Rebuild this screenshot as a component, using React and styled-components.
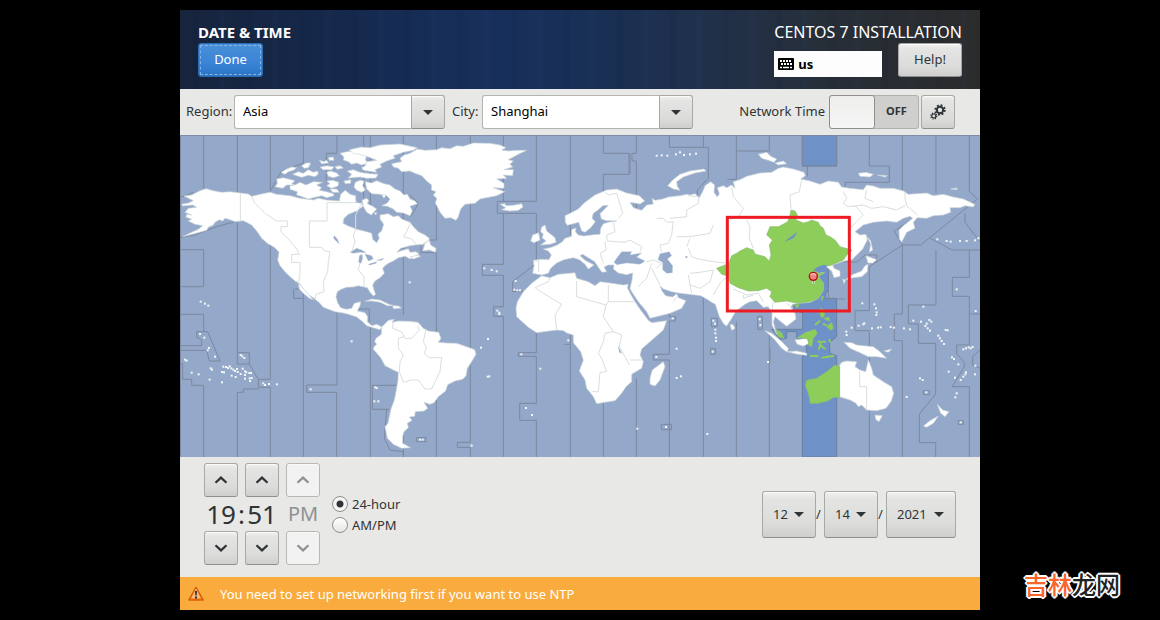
import React, { useState } from 'react';
import styled, { createGlobalStyle, css } from 'styled-components';

const GlobalStyle = createGlobalStyle`
  * {
    box-sizing: border-box;
  }

  body {
    margin: 0;
    background: #000;
    color: #2e3436;
    font-family: "Noto Sans", "Open Sans", sans-serif;
    font-size: 13px;
    line-height: 20px;
  }

  button,
  input,
  select {
    font: inherit;
    color: inherit;
    margin: 0;
  }
`;

// Raised grey look shared by every button
const raised = css`
  border: 1px solid #a8a8a4;
  border-bottom-color: #8f8f8b;
  border-radius: 3px;
  background: linear-gradient(#f2f2f1, #e4e4e3 15%, #dcdcdb 70%, #cfcfcd);
  box-shadow: inset 0 1px #fafafa;
`;

// Styled page
const Page = styled.main`
  position: relative;
  min-height: 100vh;
  padding: 10px;
`;

// Styled installer window
const Installer = styled.div`
  max-width: 800px;
  margin: 0 auto;
  background: #e8e8e6;
`;

// Styled header bar
const Header = styled.header`
  display: flex;
  justify-content: space-between;
  padding: 12px 18px;
  color: #fff;
  background:
    repeating-linear-gradient(90deg, transparent 0 11px, rgba(10, 20, 50, 0.1) 15px 17px, transparent 21px 37px, rgba(50, 90, 150, 0.06) 41px 43px, transparent 47px 53px),
    linear-gradient(90deg, #17243c 0%, #15284a 18%, #162d57 32%, #17305b 42%, #1a2f52 55%, #20304a 66%, #272e37 82%, #2b2b2b 100%);
`;

const HeaderSide = styled.div`
  display: flex;
  flex-direction: column;
  align-items: flex-start;
`;

const Title = styled.h1`
  margin: 0;
  font-size: ${props => (props.$light ? '16px' : '15px')};
  line-height: 21px;
  font-weight: ${props => (props.$light ? 400 : 700)};
`;

const HeaderRow = styled.div`
  display: flex;
  align-items: flex-end;
  justify-content: space-between;
  width: 100%;
`;

// Styled done button
const DoneButton = styled.button`
  height: 34px;
  width: 65px;
  padding: 0 0 2px;
  border: 1px solid #2a6db5;
  border-radius: 3px;
  color: #fff;
  background: linear-gradient(#4a90d9, #3a84d6 60%, #2c73c3);
  outline: 1px dashed #86b5e8;
  outline-offset: -3px;
`;

const HelpButton = styled.button`
  ${raised}
  height: 34px;
  width: 64px;
  padding: 0 0 2px;
  color: #2e3436;
`;

// Styled keyboard layout indicator
const Layout = styled.div`
  display: flex;
  align-items: center;
  gap: 4px;
  width: 108px;
  height: 26px;
  padding: 0 4px;
  background: #fdfdfd;
  color: #000;
  font-weight: 700;
`;

// Styled toolbar
const Toolbar = styled.div`
  display: flex;
  align-items: center;
  padding: 6px 25px 6px 6px;
`;

const Label = styled.label`
  width: ${props => props.$width};
  padding-bottom: 2px;
  white-space: nowrap;
`;

// Styled entry with drop-down button
const Combo = styled.div`
  display: flex;
  width: 211px;
  height: 34px;
  margin-right: 7px;
`;

const Entry = styled.input`
  flex: 1;
  min-width: 0;
  padding: 0 8px 2px;
  border: 1px solid #b4b4b0;
  border-right: 0;
  border-radius: 3px 0 0 3px;
  background: #fff;
  color: #000;
`;

const ComboButton = styled.button`
  ${raised}
  display: grid;
  place-items: center;
  width: 34px;
  padding: 0;
  border-radius: 0 3px 3px 0;
`;

const NetworkTime = styled.div`
  display: flex;
  align-items: center;
  gap: 2px;
  margin-left: auto;
`;

const SwitchLabel = styled.label`
  display: flex;
  align-items: center;
  gap: 4px;
`;

const LabelText = styled.span`
  padding-bottom: 2px;
`;

// Styled on/off switch
const Switch = styled.input`
  appearance: none;
  display: flex;
  width: 90px;
  height: 34px;
  border: 1px solid #b0b0ad;
  border-radius: 3px;
  background: #cfcfce;
  font-size: 11px;
  font-weight: 700;
  line-height: 30px;

  &::before {
    content: "";
    box-sizing: border-box;
    width: 46px;
    margin: -1px 0 -1px -1px;
    border: 1px solid #8f8f8b;
    border-radius: 3px;
    background: linear-gradient(#eeeeed, #f5f5f5);
  }

  &::after {
    content: "OFF";
    flex: 1;
    text-align: center;
  }

  &:checked {
    flex-direction: row-reverse;
    background: #4a90d9;
  }

  &:checked::after {
    content: "ON";
    color: #fff;
  }
`;

// Styled square icon button
const IconButton = styled.button`
  ${raised}
  display: grid;
  place-items: center;
  width: 34px;
  height: 34px;
  padding: 0;

  &:disabled {
    color: #8e9192;
    border-color: #b8b8b4;
    background: #f2f2f2;
  }
`;

const Map = styled.svg`
  display: block;
  width: 100%;
  height: auto;
  background: #94a8c9;
`;

// Styled footer with time and date
const Footer = styled.div`
  display: flex;
  align-items: center;
  padding: 6px 24px 12px;
`;

const TimeGrid = styled.div`
  display: grid;
  grid-template-columns: 34px 7px 34px 7px 34px;
  grid-template-rows: 34px 34px 34px;
  place-items: center;
  font-size: 26px;
`;

const Period = styled.span`
  font-size: 20px;
  color: #8e9192;
`;

const Formats = styled.div`
  display: flex;
  flex-direction: column;
  gap: 1px;
  margin-left: 12px;
`;

const RadioLabel = styled.label`
  display: flex;
  align-items: center;
  gap: 4px;
`;

const Radio = styled.input`
  appearance: none;
  width: 16px;
  height: 16px;
  border: 1px solid #8f8f8b;
  border-radius: 50%;
  background: linear-gradient(#fff, #e6e6e5);

  &:checked {
    background: radial-gradient(circle, #2e3436 0 3px, #f4f4f4 4px);
  }
`;

const DateRow = styled.div`
  display: flex;
  align-items: center;
  margin-left: auto;
`;

const Slash = styled.span`
  width: 8px;
`;

const DateField = styled.div`
  position: relative;
`;

const DateSelect = styled.select`
  ${raised}
  appearance: none;
  display: block;
  width: ${props => (props.$wide ? '70px' : '54px')};
  height: 47px;
  padding: 0 10px;
`;

const DateCaret = styled.span`
  position: absolute;
  right: 12px;
  top: 0;
  bottom: 0;
  display: flex;
  align-items: center;
  pointer-events: none;
`;

// Styled warning bar
const Warning = styled.div`
  display: flex;
  align-items: center;
  gap: 16px;
  height: 33px;
  padding: 0 8px;
  background: #f9ac3d;
  color: #fff;
`;

// Styled site mark
const Watermark = styled.div`
  position: absolute;
  right: 40px;
  bottom: 20px;
  font-family: "Noto Sans CJK SC", sans-serif;
  font-size: 24px;
  line-height: 32px;
  font-weight: 500;
  color: #222;
  text-shadow: 2px 0 #fff, -2px 0 #fff, 0 2px #fff, 0 -2px #fff, 1px 1px #fff, -1px 1px #fff, 1px -1px #fff, -1px -1px #fff;

  em {
    font-style: normal;
    color: #f9652b;
  }
`;

const Caret = () => (
  <svg width="10" height="5" viewBox="0 0 10 5" aria-hidden="true">
    <path d="M0 0h10L5 5z" fill="currentColor" />
  </svg>
);

const Chevron = ({ down }) => (
  <svg width="14" height="8" viewBox="0 0 14 8" aria-hidden="true">
    <path d={down ? 'M1.5 1.2 7 6.4l5.500-5.200' : 'M1.500 6.800 7 1.600l5.500 5.200'} fill="none" stroke="currentColor" strokeWidth="2.200" />
  </svg>
);

const KeyboardIcon = () => (
  <svg width="16" height="12" viewBox="0 0 16 12" aria-hidden="true">
    <rect width="16" height="12" rx="1" fill="#000" />
    <path d="M2 3h12M3 6h11" stroke="#fff" strokeWidth="2" strokeDasharray="2 1" />
    <path d="M2 9.500h2M5 9.500h6M12 9.500h2" stroke="#fff" strokeWidth="1.500" />
  </svg>
);

const GearsIcon = () => (
  <svg width="16" height="16" viewBox="0 0 16 16" fill="none" stroke="#2e3436" aria-hidden="true">
    <circle cx="10" cy="6" r="3.200" strokeWidth="2" />
    <circle cx="10" cy="6" r="4.800" strokeWidth="1.800" strokeDasharray="1.900 1.870" />
    <circle cx="3.800" cy="12" r="2" strokeWidth="1.200" />
    <circle cx="3.800" cy="12" r="3" strokeWidth="1.200" strokeDasharray="1.200 1.156" />
  </svg>
);

const WarningIcon = () => (
  <svg width="16" height="16" viewBox="0 0 16 16" aria-hidden="true">
    <path d="M8 1.500 15 14H1z" fill="#f57900" stroke="#d9600a" strokeWidth="1.600" strokeLinejoin="round" />
    <path d="M8 2.500 13 12.500H3z" fill="#f9b87a" />
    <path d="M7 5h2l-.3 4.500H7.300zM7 10.500h2v2H7z" fill="#2e3436" />
  </svg>
);

// Time zone outlines on the sea, in map units (three per pixel)
const ZONES = [
  'M0 1H2400M1 0V966M71 0V160M71 344V455M0 344H71M0 455H71M0 538H71V590M50 590H83L120 678H88L80 646H0M0 632H65V615L50 606V590',
  'M0 686H8V733H35V751H71V966M172 0V180M0 308L45 300 110 275 172 258M172 258V653H208V687L235 733H271M235 733V757H271V966M172 966V772H190V762H235V757M172 653V687H208',
  'M0 188L40 172M271 0V168L305 108 370 85V0M271 325V733M370 440V966M345 462H375M341 462V490H370M471 0V55H439V140M471 520V750H380V772H470V966',
  'M571 0V210M528 522H568V560M571 570V966M551 0V190M650 751H577V823H628M620 823L613 910 630 945 670 950V966M670 0V540M670 560V966',
  'M769 0V315H723V353H769V966M690 180L715 205 692 245M871 0V922H832V937H871V966M941 515V544H970M941 515H970V421H907V388H970V235M970 0V199M952 199H1069M952 199V235H1069M1069 0V199M1069 235V385L998 440V470H1035',
  'M970 544V966M1069 593V653H1015V664H1069V805H1019V856H1069V966M1171 0V300M1171 595V966M1153 628H1171M1270 0V55H1347V118H1270V180M1350 55V118M1369 0V55H1356V78H1369V400M1270 800V966',
  'M1369 730V966M1468 0V37H1585V130L1552 165V185M1570 0V37M1468 540V545H1487V558H1468V658H1420V675H1468V966M1444 868H1474V884H1444ZM1468 490V545M1570 485V966',
  'M1669 0V133H1642M1669 48H1768V0M1669 560V966M1768 600V966M1770 640V680M1594 550H1612V575H1594ZM1592 641H1607V658H1592ZM1733 544H1747V583H1733Z',
  'M1867 0V93H1970V0M1882 93V125M2068 0V93H2128V142H1996V170M2167 0V165M2268 0V175M2368 0V170L2390 190M2395 190L2222 330H2167L2143 288 2215 240M2355 235V262L2400 320M2250 310L2317 345H2400M2368 345V427H2317V484H2368V630H2330V655L2353 683V695L2317 755H2368V966',
  'M2167 330L2068 395V527H2025V587H2068V966M2167 330V537H2143V617H2167V966M2268 345V510H2185V567H2215V625H2267V777L2218 837V923H2267V966M2230 767H2248V779H2230ZM2335 857H2350V868H2335ZM2368 537H2400M2400 645L2378 665V690L2400 700',
  'M1995 492H1945V465M1990 380L2030 382 2055 360 2090 360V382M709 908H738V920H709Z',
];

// Land masses
const LAND = [
  // north america
  'M45 175L60 167 78 161 100 167 125 172 150 170 181 174 205 177 215 184 240 178 270 172 290 178 330 182 360 190 400 195 415 190 440 195 478 198 482 178 496 166 510 178 526 182 529 203 545 205 550 213 530 228 505 238 492 250 489 265 505 273 530 283 560 290 575 295 578 313 590 323 598 310 594 298 605 287 611 268 600 252 600 240 625 236 640 245 655 242 665 252 680 258 690 262 700 275 715 290 735 300 748 310 745 320 728 328 705 330 690 332 662 340 650 352 668 346 685 341 690 352 708 350 717 357 705 364 690 372 676 364 655 368 640 378 625 385 615 392 608 400 613 415 600 428 585 438 578 450 582 465 587 478 580 483 570 472 562 458 548 455 535 452 520 456 500 457 485 462 472 470 468 485 473 503 482 518 500 523 515 520 523 505 542 500 540 512 532 528 555 533 563 545 562 560 575 572 590 568 606 576 600 584 575 577 560 572 548 560 530 546 505 538 490 534 465 530 430 517 418 503 400 488 385 480 372 465 358 445 345 438 330 425 315 410 300 392 293 375 297 352 285 338 262 325 245 310 233 292 215 270 190 257 165 260 150 254 135 250 128 258 118 254 105 262 100 270 85 277 80 286 50 294 8 305 30 294 55 283 68 272 45 268 25 258 35 252 18 247 20 238 35 240 15 232 25 220 50 217 38 210 8 213 5 208 25 204 40 197 12 183 35 180Z',
  'M355 445L365 455 378 470 392 486 400 495 388 490 370 475 358 462Z',
  'M735 325L748 316 752 330 768 340 766 352 748 345 728 347 732 335ZM690 366L715 360 722 364 700 372Z',
  // arctic islands
  'M290 132L310 128 345 137 335 146 345 150 320 150 308 160 285 155 292 146Z',
  'M330 152L345 150 360 142 378 150 400 140 428 142 410 150 425 158 418 166 440 170 460 176 462 182 440 188 425 182 400 188 385 192 360 183 350 180 352 170 330 163Z',
  'M338 118L355 110 370 115 385 104 400 112 412 108 415 117 405 125 385 121 365 127 350 122ZM303 112L318 103 335 96 350 98 340 106 325 110 315 118ZM365 92L378 84 392 84 385 98 372 100ZM418 76L432 80 440 76 445 84 425 86ZM420 97L440 92 462 96 455 104 430 104Z',
  'M445 68L460 66 462 76 448 76ZM480 55L500 50 522 47 545 58 560 62 556 75 566 85 545 90 530 84 515 88 505 80 490 75 492 66ZM465 95L480 92 490 99 472 103ZM440 112L452 108 470 114 478 122 460 128 445 124Z',
  'M508 44L545 36 570 38 600 30 660 27 712 38 700 46 670 52 640 62 645 70 620 78 600 88 605 96 585 104 590 112 550 106 545 98 556 92 560 80 590 76 560 64 540 58 520 56Z',
  'M502 108L520 104 540 112 570 116 594 118 588 129 560 130 540 126 505 129 515 118ZM492 138L512 134 512 145 496 146ZM440 138L458 136 476 142 474 153 455 160 440 152 450 146Z',
  'M526 142L540 136 552 138 548 152 556 165 545 172 530 166 522 156ZM556 140L575 144 590 137 612 146 630 150 645 162 660 168 672 180 682 178 690 192 705 198 712 206 690 214 697 228 690 242 670 234 650 232 640 222 622 214 605 212 622 204 630 192 620 182 600 178 575 176 560 162Z',
  'M546 196L560 190 566 196 562 206 578 214 590 222 574 240 560 232 550 214ZM604 178L618 180 612 190ZM583 235L590 232 588 240ZM450 162L470 162 478 172 458 172Z',
  // greenland and iceland
  'M635 86L665 80 660 70 672 60 690 55 712 42 735 46 770 44 785 38 810 41 830 32 850 34 880 24 930 25 960 30 978 38 965 45 985 48 1010 46 1040 46 1015 58 1000 66 985 74 1000 78 990 88 998 96 972 104 1000 104 998 122 970 120 980 130 950 132 972 145 972 160 940 158 974 170 950 182 920 188 900 192 885 205 855 208 842 222 835 245 828 256 812 248 795 250 780 232 772 215 766 205 770 190 760 180 768 170 754 165 755 150 742 140 725 122 705 115 690 108 665 110 655 100 640 96Z',
  'M960 208L975 206 978 212 1000 211 1025 206 1029 216 1015 226 990 228 965 224 977 218Z',
  // south america
  'M605 576L625 556 643 553 636 562 655 558 690 559 714 562 730 580 745 588 776 592 783 610 775 622 800 624 830 625 860 635 884 644 888 658 872 685 862 700 858 722 848 733 825 738 803 749 797 768 775 785 762 803 750 808 732 802 743 820 732 828 706 830 704 844 688 846 696 856 682 865 685 878 672 890 668 905 668 925 692 938 665 940 640 928 622 910 618 890 615 875 624 865 628 845 633 822 643 795 649 765 654 735 655 712 640 705 615 692 602 668 580 643 582 635 590 628 584 620 588 610 604 598Z',
  'M555 499L575 492 600 495 625 507 642 512 622 512 600 502 575 498ZM638 512L655 513 665 519 640 521Z',
  // europe and asia
  'M1058 415L1062 392 1060 376 1085 373 1107 374 1114 360 1105 348 1090 342 1110 338 1130 331 1147 320 1155 310 1175 304 1175 284 1188 279 1186 290 1195 300 1212 303 1240 299 1260 298 1262 280 1270 266 1288 261 1310 258 1280 257 1264 252 1260 236 1276 220 1285 211 1268 212 1258 222 1240 235 1236 250 1246 260 1232 278 1215 292 1205 288 1196 262 1180 266 1162 271 1156 262 1155 242 1172 234 1195 222 1215 202 1245 180 1280 165 1310 162 1340 174 1378 182 1394 198 1380 207 1350 202 1360 218 1385 226 1400 210 1420 207 1416 190 1425 196 1448 192 1465 186 1500 182 1520 178 1530 180 1545 176 1558 188 1570 166 1575 152 1592 140 1604 150 1602 172 1612 186 1618 176 1612 158 1630 152 1640 158 1655 150 1665 160 1660 140 1680 134 1700 124 1740 114 1775 112 1795 100 1810 96 1840 102 1872 112 1876 122 1862 132 1890 138 1920 148 1945 138 1975 142 1985 156 2010 160 2050 164 2060 150 2080 153 2100 160 2140 160 2170 168 2185 178 2240 174 2260 182 2290 178 2320 186 2350 192 2384 208 2380 216 2355 212 2340 218 2310 218 2312 232 2290 240 2260 242 2240 250 2212 248 2200 262 2205 280 2180 292 2165 322 2158 312 2157 286 2170 272 2198 250 2190 244 2170 250 2150 262 2120 258 2080 262 2050 270 2025 290 2040 300 2058 298 2062 315 2048 342 2015 375 1992 378 1958 390 1962 400 1980 408 1980 424 1962 428 1955 408 1935 392 1905 402 1912 415 1935 412 1915 424 1930 445 1930 465 1915 490 1890 502 1855 505 1838 508 1832 516 1845 535 1848 552 1820 574 1800 558 1785 545 1780 560 1785 580 1803 603 1790 598 1776 570 1776 535 1765 515 1750 517 1730 497 1710 500 1695 508 1668 528 1652 555 1640 573 1632 568 1618 545 1606 508 1595 502 1580 492 1562 482 1520 477 1495 474 1475 470 1450 462 1440 452 1446 468 1457 482 1478 486 1490 476 1495 488 1518 497 1505 520 1470 535 1410 550 1400 530 1375 500 1355 470 1350 460 1356 435 1358 414 1340 419 1315 414 1300 402 1302 390 1285 390 1272 396 1280 410 1266 412 1256 398 1244 380 1225 368 1208 358 1200 362 1215 376 1242 390 1225 402 1215 388 1198 374 1180 368 1152 374 1130 384 1112 400 1105 415 1085 420Z',
  'M1085 276L1095 270 1100 288 1125 308 1128 322 1110 328 1082 330 1098 318 1086 308 1090 298 1082 290ZM1052 318L1058 300 1076 293 1080 315 1062 323Z',
  'M1463 152L1480 162 1500 166 1492 154 1490 140 1510 126 1545 114 1578 108 1572 102 1530 108 1500 118 1478 135ZM1735 58L1760 52 1772 64 1790 72 1782 82 1765 76 1745 70ZM1785 84L1810 78 1820 86 1795 90ZM2035 115L2058 112 2080 118 2070 126 2040 124ZM2092 120L2122 122 2115 126ZM2312 162L2332 159 2330 164Z',
  // japan and sakhalin
  'M2062 305L2072 318 2078 345 2068 352 2072 328ZM2058 362L2090 374 2078 384 2064 384ZM2064 388L2062 410 2045 425 2020 428 1995 435 2015 420 2045 408 2055 392ZM1988 432L1996 436 1992 446Z',
  // africa
  'M1085 422L1110 428 1135 418 1185 413 1190 430 1225 440 1245 452 1260 440 1290 444 1330 450 1345 448 1342 458 1352 478 1365 500 1382 525 1405 556 1415 563 1460 557 1450 585 1410 620 1385 642 1380 660 1390 680 1385 700 1355 718 1355 740 1338 755 1325 775 1305 797 1275 802 1250 806 1240 785 1220 760 1215 735 1198 708 1210 675 1202 650 1180 623 1180 600 1162 595 1150 587 1130 585 1070 593 1045 577 1010 545 1008 520 1012 500 1030 470 1055 445Z',
  'M1450 680L1455 695 1440 735 1425 753 1410 748 1410 730 1417 705Z',
  // asia pacific
  'M1755 587L1775 595 1800 615 1825 640 1822 652 1805 640 1785 615ZM1822 650L1850 648 1880 655 1880 661 1850 657ZM1845 615L1880 610 1888 625 1870 633 1852 628ZM1650 568L1660 570 1665 580 1655 586Z',
  'M1992 622L2015 623 2030 630 2080 635 2100 650 2120 670 2090 665 2065 665 2040 653 2010 640ZM2112 648L2135 642 2125 652Z',
  'M1978 692L1985 682 2000 678 2030 680 2025 695 2040 705 2057 710 2065 675 2075 700 2080 720 2110 740 2135 755 2141 775 2134 798 2118 820 2090 827 2060 825 2045 810 2035 815 2028 805 2010 795 1978 785Z',
  'M2085 840L2107 842 2097 860 2087 853ZM2272 808L2288 825 2307 830 2295 845 2282 835ZM2275 843L2260 865 2240 877 2230 873 2250 857Z',
];

// Zones that share the selected offset
const SELECTED_SEA = 'M1867 0H1970V93H1867ZM1890 400L1945 395V470H1938L1935 490H1970V605L1948 623 1950 655 1970 663V966H1867V663L1880 655 1878 630 1850 610V590H1820V610L1800 613 1775 583H1868V533L1840 525 1845 495Z';

const SELECTED_LAND = [
  'M1833 225L1845 228 1852 240 1848 255 1870 264 1885 260 1895 255 1915 262 1920 272 1930 280 1938 300 1950 305 1965 315 1980 335 2005 342 2016 346 2002 358 1990 375 1950 392 1932 393 1905 402 1912 415 1935 412 1915 424 1930 445 1930 465 1915 490 1890 500 1855 505 1838 502 1820 498 1785 502 1770 485 1775 470 1760 460 1735 467 1705 468 1675 458 1650 445 1645 423 1625 418 1610 400 1635 390 1647 385 1650 375 1655 362 1670 355 1680 348 1700 338 1720 345 1725 357 1755 365 1768 378 1773 360 1768 330 1777 315 1760 300 1770 275 1795 275 1815 265 1823 260 1830 240Z',
  'M1979 695L1965 690 1940 710 1910 730 1880 736 1876 750 1888 785 1890 805 1915 805 1945 797 1960 787 1979 787Z',
  'M1850 610L1875 593 1905 583 1912 595 1900 610 1895 635 1885 630 1885 613 1865 608ZM1786 583L1805 593 1812 610 1795 605ZM1843 510L1858 507 1853 520ZM1924 485L1931 484 1925 499Z',
  'M1920 520L1932 524 1934 540 1926 550 1920 538ZM1932 550L1946 546 1950 558 1940 556ZM1940 575L1955 562 1960 580 1952 586Z',
];

const SELECTED_LINES = 'M1905 570L1920 557M1912 620H1938M1922 624L1916 644M1922 632L1936 642M1948 612L1950 622M1890 662L1915 664M1925 668L1962 662M1928 566L1940 572';

// Bay beside the pin and the lake north of it
const SELECTED_WATER = 'M1900 405L1912 396 1930 389 1944 392 1932 400 1936 410 1915 412ZM1851 291Q1846 307 1835 312L1812 320Q1840 300 1851 291Z';

// Lakes and inland seas
const WATER = [
  'M1310 370L1325 350 1355 350 1350 360 1385 354 1370 366 1395 378 1380 388 1340 384 1310 389 1302 382Z',
  'M1440 356L1468 350 1475 362 1462 372 1478 392 1477 413 1460 415 1448 404 1448 382 1434 374Z',
  'M510 352L530 340 545 345 558 353 540 352 520 355ZM538 362L546 358 548 370 543 385 536 382ZM555 357L575 362 580 372 565 378 560 368ZM565 388L590 380 588 385 570 390ZM590 376L612 370 605 376Z',
  'M463 302L472 312 478 326 466 316 460 308ZM1315 634L1325 655 1318 652ZM1516 364H1522V368H1516Z',
];

// Faint borders between zones on land
const BORDERS = [
  'M181 175V258M215 184L225 205 255 235 290 258H322V275H303V290L325 312 350 342 358 358H335V382H360V420L355 445M441 203H528M441 203V258H388V337H425L432 347 450 350 445 380 443 410 430 440 432 470 408 478 405 495M526 180V203M545 205L527 240V285L520 300 525 320 515 350M540 385L535 405 552 425V455M692 262L680 290 670 305 695 312 710 330M725 330L748 315',
  'M640 560L638 580 665 590 675 610 695 610 718 585 712 572M738 582L730 620 740 640 732 655 748 668 785 668 780 710 765 740 755 762 735 762 715 735 695 735 670 742 658 710 660 680 670 660 655 640V610L672 605',
  'M1275 170L1285 180 1310 175 1322 215 1328 235 1315 250M1300 262L1305 290 1280 300 1282 318 1335 322 1350 315 1385 335 1380 350M1275 320L1278 345 1260 355 1270 385M1062 378H1076V410M1430 250H1450L1460 262 1480 260 1475 300 1465 325 1440 330 1445 350M1525 182L1555 185 1555 205 1520 225V245L1470 250',
  'M1400 380L1420 375 1445 385 1430 400M1490 305H1530L1590 295 1600 270M1525 340L1535 365 1555 372 1600 380 1645 385M1530 310L1520 335M1415 385L1400 430 1375 455M1415 400L1440 450M1530 415L1560 412 1600 405 1590 440 1560 460 1530 450 1525 420M1530 450L1535 475M1640 425L1620 445 1600 480M1660 462L1700 480 1735 475',
  'M1110 428L1105 440 1065 458 1090 475 1145 508 1125 540 1130 583M1190 438V485L1278 510 1285 500H1362M1285 450V500M1278 510L1270 545 1300 590 1275 595 1270 620 1255 655 1265 670 1280 710 1260 712 1255 770H1235M1300 590L1325 600 1318 635 1335 665 1348 690M1350 675H1385M1480 500L1490 485',
  'M1655 155L1660 185 1690 220 1680 240 1650 255M1700 255L1710 275 1708 310 1720 340M1865 135L1858 170 1830 180 1833 222M1990 170L2000 190 1990 205 2005 215 2050 210 2075 220 2110 215 2150 225 2175 212M2060 165L2055 190 2080 200M2025 212L2050 240 2030 260 2010 280 2005 320M2175 170V190L2180 212 2212 240',
  'M2039 710V755H2060V825M1735 475L1750 500M1780 500L1775 530M1820 505L1840 520M1690 480V490L1720 480',
];

// Small islands
const ISLANDS = [
  [85, 512], [62, 500], [75, 506], [60, 597], [73, 608], [87, 639], [83, 646], [105, 665], [15, 674], [20, 677], [35, 713], [56, 718], [89, 734], [126, 742], [92, 700], [96, 704],
  [130, 695], [138, 696], [144, 699], [149, 694], [154, 700], [160, 704], [165, 708], [171, 702], [126, 711], [132, 712], [155, 722], [167, 726], [173, 711], [182, 717], [188, 701], [195, 709], [195, 720], [195, 731], [199, 712], [208, 714], [213, 714], [209, 730], [215, 729], [210, 738],
  [182, 660], [187, 664], [193, 669], [250, 745], [255, 750], [267, 747], [291, 748], [392, 763], [586, 757], [590, 759], [583, 799], [595, 799], [515, 619], [924, 612], [903, 638], [923, 725], [928, 724], [689, 442], [875, 932], [720, 914], [728, 914], [952, 527], [958, 533], [958, 537],
  [913, 400], [935, 405], [950, 409], [1007, 438], [1003, 464], [1012, 466], [1020, 466], [1024, 658], [1081, 701], [1038, 819], [1056, 840], [1165, 616], [1429, 666], [1490, 641], [1503, 724], [1490, 729], [1458, 876], [1372, 881], [1478, 550], [1582, 897],
  [1600, 557], [1605, 566], [1606, 584], [1606, 595], [1608, 608], [1608, 618], [1598, 650], [1739, 553], [1741, 570], [1764, 681], [2047, 505], [2083, 508], [2088, 520], [2090, 532], [2089, 540], [2036, 572], [2050, 568], [2053, 565], [2015, 578], [1999, 590], [2000, 600], [2076, 580], [2094, 578], [2102, 577], [2132, 576], [2142, 578], [2172, 580], [2190, 583],
  [2200, 557], [2223, 560], [2230, 515], [2240, 566], [2248, 555], [2236, 573], [2243, 580], [2250, 587], [2254, 560], [2275, 602], [2280, 610], [2285, 618], [2292, 627], [2297, 585], [2303, 586], [2387, 528], [2350, 643], [2358, 640], [2366, 637], [2372, 640], [2378, 636], [2316, 667], [2322, 672], [2306, 710], [2335, 688], [2325, 728], [2342, 735], [2350, 725], [2356, 718], [2358, 712], [2385, 718], [2386, 692],
  [2330, 775], [2326, 787], [2180, 786], [2220, 730], [2228, 735], [2239, 772], [2342, 862], [2272, 313], [2300, 318], [2312, 320], [2340, 318], [2360, 318], [2385, 316], [2395, 310], [2330, 463], [1430, 62], [1445, 61], [1462, 62], [1488, 58], [1500, 52], [1512, 60], [1530, 58], [1548, 56],
];

/**
 * TimezoneMap draws the world with the selected zone and its pin
 */
const TimezoneMap = () => (
  <Map viewBox="0 0 2400 966" role="img" aria-label="Time zone map">
    <path d={SELECTED_SEA} fill="#6e92c8" stroke="#6b7f9f" strokeWidth="3" />
    <g fill="none" stroke="#7c899f" strokeWidth="3">
      {ZONES.map(d => <path key={d} d={d} />)}
    </g>
    <g fill="#fff" stroke="#c9d3d8" strokeWidth="2" strokeLinejoin="round">
      {LAND.map(d => <path key={d} d={d} />)}
    </g>
    <g fill="#f4f7f8">
      {ISLANDS.map(([x, y]) => <rect key={`${x}-${y}`} x={x - 3} y={y - 3} width="6" height="6" />)}
    </g>
    <g fill="#94a8c9" stroke="#b9c5d6" strokeWidth="1">
      {WATER.map(d => <path key={d} d={d} />)}
    </g>
    <g fill="none" stroke="#d9dfde" strokeWidth="3">
      {BORDERS.map(d => <path key={d} d={d} />)}
    </g>
    <g fill="#8dcd59" stroke="#8dbb77" strokeWidth="2" strokeLinejoin="round">
      {SELECTED_LAND.map(d => <path key={d} d={d} />)}
    </g>
    <path d={SELECTED_LINES} fill="none" stroke="#8dcd59" strokeWidth="6" />
    <path d={SELECTED_WATER} fill="#6e92c8" />
    {/* pin */}
    <path d="M1900 434V446" stroke="#fff" strokeWidth="7" />
    <path d="M1900 432V446" stroke="#777" strokeWidth="3" />
    <circle cx="1900" cy="424" r="12" fill="#f58080" stroke="#b11212" strokeWidth="4" />
    <path d="M1892 420Q1900 412 1908 420" fill="none" stroke="#fbc4c4" strokeWidth="4" />
    <rect x="1642" y="247" width="366" height="281" fill="none" stroke="#ed1c24" strokeWidth="9" />
  </Map>
);

const ComboBox = ({ id, value }) => (
  <Combo>
    <Entry id={id} defaultValue={value} />
    <ComboButton type="button" aria-label={`Choose ${id}`}>
      <Caret />
    </ComboButton>
  </Combo>
);

const DateDropdown = ({ label, value, wide }) => (
  <DateField>
    <DateSelect aria-label={label} defaultValue={value} $wide={wide}>
      <option>{value}</option>
    </DateSelect>
    <DateCaret>
      <Caret />
    </DateCaret>
  </DateField>
);

const App = () => {
  const [networkTime, setNetworkTime] = useState(false);
  const [format, setFormat] = useState('24');

  return (
    <Page>
      <GlobalStyle />
      <Installer>
        <Header>
          <HeaderSide>
            <Title>DATE &amp; TIME</Title>
            <DoneButton type="button">Done</DoneButton>
          </HeaderSide>
          <HeaderSide>
            <Title as="h2" $light>CENTOS 7 INSTALLATION</Title>
            <HeaderRow>
              <Layout>
                <KeyboardIcon />
                us
              </Layout>
              <HelpButton type="button">Help!</HelpButton>
            </HeaderRow>
          </HeaderSide>
        </Header>

        <Toolbar>
          <Label htmlFor="region" $width="48px">Region:</Label>
          <ComboBox id="region" value="Asia" />
          <Label htmlFor="city" $width="30px">City:</Label>
          <ComboBox id="city" value="Shanghai" />
          <NetworkTime>
            <SwitchLabel>
              <LabelText>Network Time</LabelText>
              <Switch type="checkbox" role="switch" checked={networkTime} onChange={() => setNetworkTime(!networkTime)} />
            </SwitchLabel>
            <IconButton type="button" aria-label="Configure NTP">
              <GearsIcon />
            </IconButton>
          </NetworkTime>
        </Toolbar>

        <TimezoneMap />

        <Footer>
          <TimeGrid>
            <IconButton type="button" aria-label="Hour up"><Chevron /></IconButton>
            <span />
            <IconButton type="button" aria-label="Minute up"><Chevron /></IconButton>
            <span />
            <IconButton type="button" aria-label="Period up" disabled><Chevron /></IconButton>
            <span>19</span>
            <span>:</span>
            <span>51</span>
            <span />
            <Period>PM</Period>
            <IconButton type="button" aria-label="Hour down"><Chevron down /></IconButton>
            <span />
            <IconButton type="button" aria-label="Minute down"><Chevron down /></IconButton>
            <span />
            <IconButton type="button" aria-label="Period down" disabled><Chevron down /></IconButton>
          </TimeGrid>
          <Formats>
            <RadioLabel>
              <Radio type="radio" name="format" checked={format === '24'} onChange={() => setFormat('24')} />
              24-hour
            </RadioLabel>
            <RadioLabel>
              <Radio type="radio" name="format" checked={format === '12'} onChange={() => setFormat('12')} />
              AM/PM
            </RadioLabel>
          </Formats>
          <DateRow>
            <DateDropdown label="Month" value="12" />
            <Slash>/</Slash>
            <DateDropdown label="Day" value="14" />
            <Slash>/</Slash>
            <DateDropdown label="Year" value="2021" wide />
          </DateRow>
        </Footer>

        <Warning role="status">
          <WarningIcon />
          You need to set up networking first if you want to use NTP
        </Warning>
      </Installer>
      <Watermark><em>吉林</em>龙网</Watermark>
    </Page>
  );
};

export default App;
